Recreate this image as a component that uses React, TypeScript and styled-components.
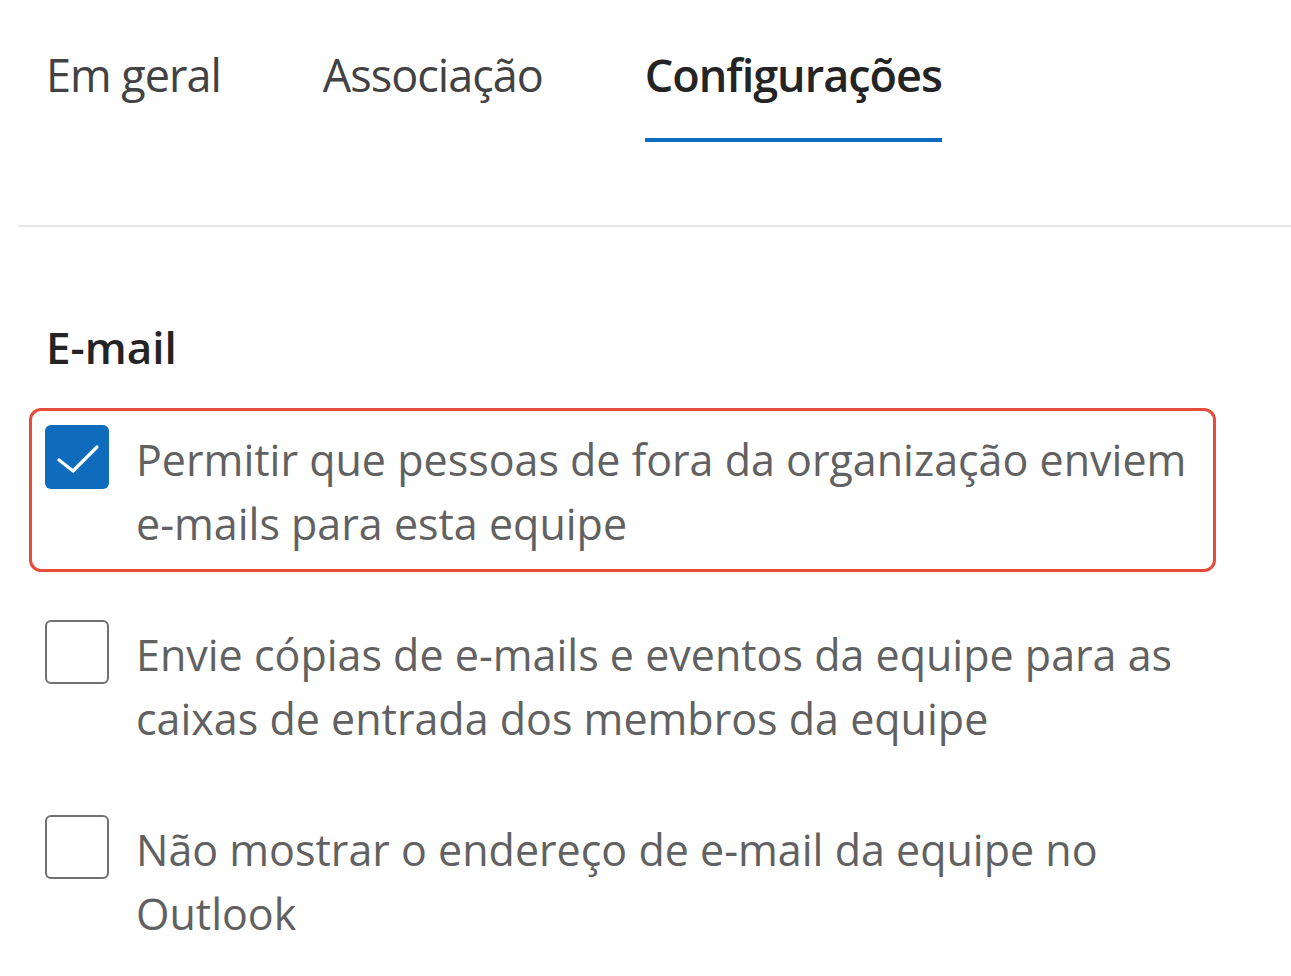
import React from "react";
import styled, { createGlobalStyle } from "styled-components";

const Global = createGlobalStyle`
  html, body { margin: 0; padding: 0; background: #ffffff; }
  body { font-family: "Open Sans", "Noto Sans", Arial, sans-serif; }
`;

const Page = styled.div`
  width: 1291px;
  height: 976px;
  overflow: hidden;
  background: #fff;
`;

const TabBar = styled.div`
  display: flex;
  gap: 102px;
  padding: 40px 0 0 46px;
`;

const Tab = styled.div<{ $active?: boolean }>`
  font-size: 45px;
  line-height: 70px;
  color: ${(p) => (p.$active ? "#242424" : "#424242")};
  font-weight: ${(p) => (p.$active ? 600 : 400)};
  letter-spacing: -1px;
  height: 102px;
  border-bottom: 4px solid ${(p) => (p.$active ? "#0f6cbd" : "transparent")};
  box-sizing: border-box;
`;

const Divider = styled.div`
  margin: 83px 0 0 18px;
  height: 2px;
  background: #e6e6e6;
`;

const Section = styled.div`
  padding: 90px 0 0 29px;
`;

const Heading = styled.h2`
  margin: 0 0 31px 17px;
  font-size: 44px;
  line-height: 60px;
  font-weight: 600;
  color: #242424;
`;

const List = styled.div`
  display: flex;
  flex-direction: column;
  gap: 31px;
`;

const Item = styled.label<{ $highlight?: boolean }>`
  display: flex;
  align-items: flex-start;
  gap: 27px;
  width: 1187px;
  box-sizing: border-box;
  padding: 13px 0 0 13px;
  min-height: 164px;
  border: 3px solid ${(p) => (p.$highlight ? "#e34d3a" : "transparent")};
  border-radius: 12px;
`;

const Box = styled.span<{ $checked?: boolean }>`
  flex: none;
  width: 64px;
  height: 64px;
  margin-top: 1px;
  box-sizing: border-box;
  border-radius: 6px;
  border: ${(p) => (p.$checked ? "none" : "2px solid #707070")};
  background: ${(p) => (p.$checked ? "#0f6cbd" : "#fff")};
  display: flex;
  align-items: center;
  justify-content: center;
`;

const Label = styled.span`
  font-size: 43px;
  line-height: 64px;
  color: #616161;
  width: 1060px;
  margin-top: 4px;
`;

const NoBreak = styled.span`
  white-space: nowrap;
`;

const Check = () => (
  <svg width="64" height="64" viewBox="0 0 64 64">
    <path d="M14 35 L28 46 L52 22" fill="none" stroke="#fff" strokeWidth="3.2" strokeLinecap="round" strokeLinejoin="round" />
  </svg>
);

const renderText = (t: string) =>
  t.split(" ").map((w, i, arr) => (
    <React.Fragment key={i}>
      {w.includes("-") ? <NoBreak>{w}</NoBreak> : w}
      {i < arr.length - 1 ? " " : ""}
    </React.Fragment>
  ));

const options = [
  { text: "Permitir que pessoas de fora da organização enviem e-mails para esta equipe", checked: true, highlight: true },
  { text: "Envie cópias de e-mails e eventos da equipe para as caixas de entrada dos membros da equipe", checked: false },
  { text: "Não mostrar o endereço de e-mail da equipe no Outlook", checked: false },
];

export default function App() {
  return (
    <Page>
      <Global />
      <TabBar>
        <Tab>Em geral</Tab>
        <Tab>Associação</Tab>
        <Tab $active>Configurações</Tab>
      </TabBar>
      <Divider />
      <Section>
        <Heading>E-mail</Heading>
        <List>
          {options.map((o) => (
            <Item key={o.text} $highlight={o.highlight}>
              <Box $checked={o.checked}>{o.checked && <Check />}</Box>
              <Label>{renderText(o.text)}</Label>
            </Item>
          ))}
        </List>
      </Section>
    </Page>
  );
}
